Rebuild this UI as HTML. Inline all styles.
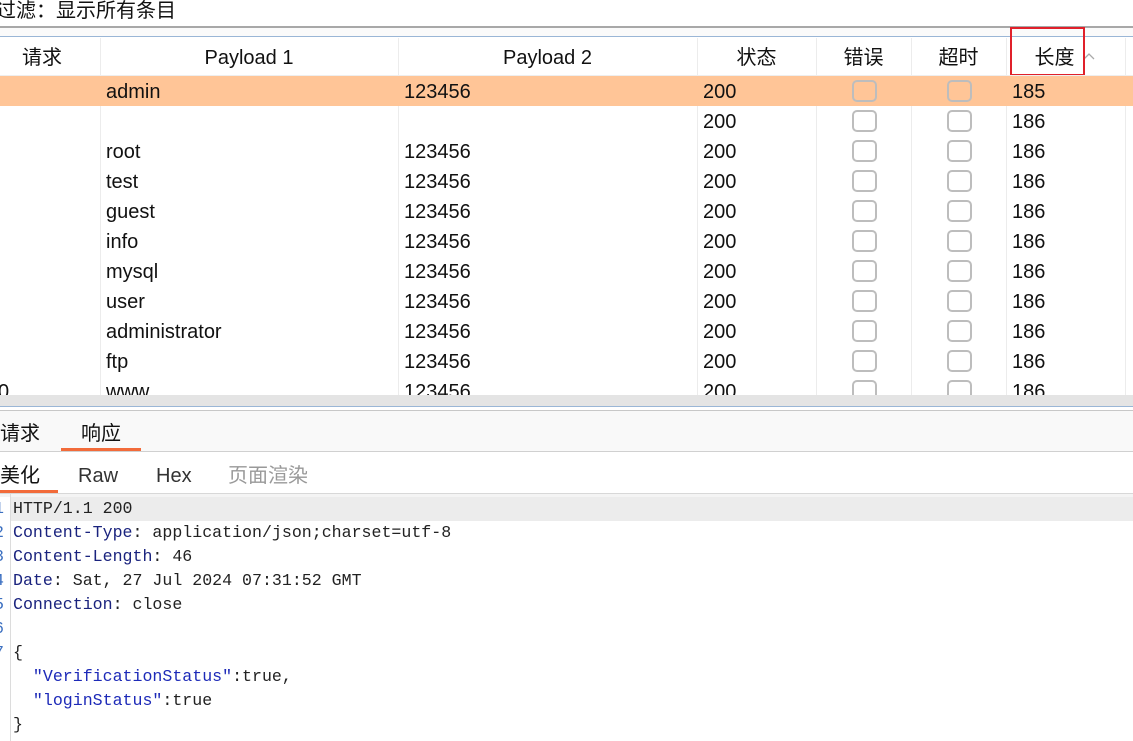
<!DOCTYPE html>
<html><head><meta charset="utf-8"><style>
*{margin:0;padding:0;box-sizing:border-box}
body{width:1133px;height:741px;overflow:hidden;background:#fff;position:relative;font-family:"Liberation Sans","Noto Sans CJK SC",sans-serif;color:#111}
.a{position:absolute}
.filter{left:-4px;top:0;height:26px;width:1133px;font-size:20px;line-height:22px}
.row{position:absolute;left:0;width:1133px;height:30px;font-size:20px;line-height:32px}
.c{position:absolute;top:0;height:30px;padding-left:6px;white-space:nowrap}
.vl{position:absolute;top:38px;width:1px;height:357px;background:#ececec}
.cb{position:absolute;top:4px;width:25px;height:22px;border:2px solid #bdbdbd;border-radius:5px;background:#fff}
.hdr{position:absolute;top:38px;height:38px;font-size:20px;line-height:40px;text-align:center}
.code{font-family:"Liberation Mono","Noto Sans CJK SC",monospace;font-size:16.6px;line-height:24px;white-space:pre}
.k{color:#1a237e}
.s{color:#1d2ab8}
</style></head><body>
<div class="a filter">过滤：显示所有条目</div>
<div class="a" style="left:0;top:26px;width:1133px;height:2px;background:#a8a8a8"></div>
<div class="a" style="left:0;top:28px;width:1133px;height:9px;background:#fafafa"></div>
<div class="a" style="left:0;top:36px;width:1133px;height:1px;background:#9ab6d6"></div>

<div class="vl" style="left:100px"></div><div class="vl" style="left:398px"></div><div class="vl" style="left:697px"></div><div class="vl" style="left:816px"></div><div class="vl" style="left:911px"></div><div class="vl" style="left:1006px"></div><div class="vl" style="left:1125px"></div>

<div class="hdr" style="left:0;width:100px;padding-right:16px">请求</div>
<div class="hdr" style="left:100px;width:298px">Payload 1</div>
<div class="hdr" style="left:398px;width:299px">Payload 2</div>
<div class="hdr" style="left:697px;width:119px">状态</div>
<div class="hdr" style="left:816px;width:95px">错误</div>
<div class="hdr" style="left:911px;width:95px">超时</div>
<div class="hdr" style="left:1006px;width:119px">长度<svg width="16" height="12" style="margin-left:6px;vertical-align:2px"><path d="M3 9 L8 4 L13 9" stroke="#aaa" stroke-width="1.3" fill="none"/></svg></div>
<div class="a" style="left:1010px;top:27px;width:75px;height:49px;border:2px solid #e0202a"></div>
<div class="a" style="left:0;top:75px;width:1133px;height:1px;background:#eee"></div>

<div class="row" style="top:76px;background:#ffc597"><span class="c" style="left:100px">admin</span><span class="c" style="left:398px">123456</span><span class="c" style="left:697px">200</span><span class="cb" style="left:852px;background:transparent"></span><span class="cb" style="left:947px;background:transparent"></span><span class="c" style="left:1006px">185</span></div>
<div class="row" style="top:106px"><span class="c" style="left:697px">200</span><span class="cb" style="left:852px"></span><span class="cb" style="left:947px"></span><span class="c" style="left:1006px">186</span></div>
<div class="row" style="top:136px"><span class="c" style="left:100px">root</span><span class="c" style="left:398px">123456</span><span class="c" style="left:697px">200</span><span class="cb" style="left:852px"></span><span class="cb" style="left:947px"></span><span class="c" style="left:1006px">186</span></div>
<div class="row" style="top:166px"><span class="c" style="left:100px">test</span><span class="c" style="left:398px">123456</span><span class="c" style="left:697px">200</span><span class="cb" style="left:852px"></span><span class="cb" style="left:947px"></span><span class="c" style="left:1006px">186</span></div>
<div class="row" style="top:196px"><span class="c" style="left:100px">guest</span><span class="c" style="left:398px">123456</span><span class="c" style="left:697px">200</span><span class="cb" style="left:852px"></span><span class="cb" style="left:947px"></span><span class="c" style="left:1006px">186</span></div>
<div class="row" style="top:226px"><span class="c" style="left:100px">info</span><span class="c" style="left:398px">123456</span><span class="c" style="left:697px">200</span><span class="cb" style="left:852px"></span><span class="cb" style="left:947px"></span><span class="c" style="left:1006px">186</span></div>
<div class="row" style="top:256px"><span class="c" style="left:100px">mysql</span><span class="c" style="left:398px">123456</span><span class="c" style="left:697px">200</span><span class="cb" style="left:852px"></span><span class="cb" style="left:947px"></span><span class="c" style="left:1006px">186</span></div>
<div class="row" style="top:286px"><span class="c" style="left:100px">user</span><span class="c" style="left:398px">123456</span><span class="c" style="left:697px">200</span><span class="cb" style="left:852px"></span><span class="cb" style="left:947px"></span><span class="c" style="left:1006px">186</span></div>
<div class="row" style="top:316px"><span class="c" style="left:100px">administrator</span><span class="c" style="left:398px">123456</span><span class="c" style="left:697px">200</span><span class="cb" style="left:852px"></span><span class="cb" style="left:947px"></span><span class="c" style="left:1006px">186</span></div>
<div class="row" style="top:346px"><span class="c" style="left:100px">ftp</span><span class="c" style="left:398px">123456</span><span class="c" style="left:697px">200</span><span class="cb" style="left:852px"></span><span class="cb" style="left:947px"></span><span class="c" style="left:1006px">186</span></div>
<div class="row" style="top:376px"><span class="c" style="left:-8px">0</span><span class="c" style="left:100px">www</span><span class="c" style="left:398px">123456</span><span class="c" style="left:697px">200</span><span class="cb" style="left:852px"></span><span class="cb" style="left:947px"></span><span class="c" style="left:1006px">186</span></div>

<div class="a" style="left:0;top:395px;width:1133px;height:11px;background:#e4e4e4"></div>
<div class="a" style="left:0;top:406px;width:1133px;height:1px;background:#9ab6d6"></div>
<div class="a" style="left:0;top:407px;width:1133px;height:4px;background:#fff"></div>
<div class="a" style="left:0;top:410px;width:1133px;height:1px;background:#c8c8c8"></div>
<div class="a" style="left:0;top:411px;width:1133px;height:40px;background:#f9f9f9"></div>
<div class="a" style="left:0;top:451px;width:1133px;height:1px;background:#d0d0d0"></div>
<div class="a" style="left:0;top:421px;font-size:20px;line-height:26px">请求</div>
<div class="a" style="left:81px;top:421px;font-size:20px;line-height:26px">响应</div>
<div class="a" style="left:61px;top:448px;width:80px;height:3px;background:#f26b3a"></div>

<div class="a" style="left:0;top:463px;font-size:20px;line-height:26px">美化</div>
<div class="a" style="left:78px;top:463px;font-size:20px;line-height:26px;color:#333">Raw</div>
<div class="a" style="left:156px;top:463px;font-size:20px;line-height:26px;color:#333">Hex</div>
<div class="a" style="left:228px;top:463px;font-size:20px;line-height:26px;color:#999">页面渲染</div>
<div class="a" style="left:0;top:490px;width:58px;height:3px;background:#f26b3a"></div>
<div class="a" style="left:0;top:493px;width:1133px;height:1px;background:#d8d8d8"></div>
<div class="a" style="left:0;top:494px;width:1133px;height:3px;background:#f4f4f4"></div>
<div class="a" style="left:11px;top:497px;width:1122px;height:24px;background:#ececec"></div>
<div class="a" style="left:10px;top:494px;width:1px;height:247px;background:#dcdcdc"></div>
<div class="a code" style="left:-6px;top:497px;color:#3b6fc0">1
2
3
4
5
6
7</div>
<div class="a code" style="left:13px;top:497px;color:#222">HTTP/1.1 200
<span class="k">Content-Type</span>: application/json;charset=utf-8
<span class="k">Content-Length</span>: 46
<span class="k">Date</span>: Sat, 27 Jul 2024 07:31:52 GMT
<span class="k">Connection</span>: close

{
  <span class="s">"VerificationStatus"</span>:true,
  <span class="s">"loginStatus"</span>:true
}</div>
</body></html>
